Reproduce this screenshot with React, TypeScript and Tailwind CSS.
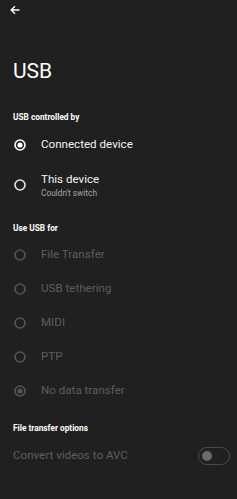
import React from "react";

function Radio({ checked, color }: { checked?: boolean; color: string }) {
  return (
    <svg width="12" height="12" viewBox="0 0 12 12" className="shrink-0">
      <circle cx="6" cy="6" r="5" fill="none" stroke={color} strokeWidth="1.6" />
      {checked && <circle cx="6" cy="6" r="2.6" fill={color} />}
    </svg>
  );
}

function Header({ children }: { children: React.ReactNode }) {
  return (
    <div className="px-[13px] h-[12px] leading-[12px] text-[8.3px] font-bold text-white">
      {children}
    </div>
  );
}

function DisabledRow({ label, checked }: { label: string; checked?: boolean }) {
  return (
    <div className="flex items-center h-[34px] pl-[14px]">
      <Radio checked={checked} color="#555555" />
      <span className="ml-[15px] text-[11.6px] text-[#5e5e5e]">{label}</span>
    </div>
  );
}

export default function App() {
  return (
    <div
      className="w-[237px] h-[499px] bg-[#202020] overflow-hidden"
      style={{ fontFamily: "Roboto, 'Noto Sans', sans-serif" }}
    >
      <div className="h-[20px] flex items-center pl-[10px]">
        <svg width="10" height="10" viewBox="0 0 10 10">
          <path d="M9.5 5H1.2M5 1.2L1.2 5L5 8.8" fill="none" stroke="#ffffff" strokeWidth="1.4" />
        </svg>
      </div>
      <div className="mt-[37px] px-[13px] h-[28px] leading-[28px] text-[21px] text-white">USB</div>
      <div className="mt-[26px]">
        <Header>USB controlled by</Header>
      </div>
      <div className="flex items-center h-[34px] mt-[5px] pl-[14px]">
        <Radio checked color="#ffffff" />
        <span className="ml-[15px] text-[11.6px] text-[#f2f2f2]">Connected device</span>
      </div>
      <div className="flex items-center h-[46px] pl-[14px]">
        <Radio color="#e6e6e6" />
        <div className="ml-[15px] flex flex-col">
          <span className="text-[11.6px] leading-[16px] text-[#f2f2f2]">This device</span>
          <span className="text-[8.3px] leading-[12px] text-[#a6a6a6]">Couldn't switch</span>
        </div>
      </div>
      <div className="mt-[14px]">
        <Header>Use USB for</Header>
      </div>
      <div className="mt-[4px]">
        <DisabledRow label="File Transfer" />
        <DisabledRow label="USB tethering" />
        <DisabledRow label="MIDI" />
        <DisabledRow label="PTP" />
        <DisabledRow label="No data transfer" checked />
      </div>
      <div className="mt-[14px]">
        <Header>File transfer options</Header>
      </div>
      <div className="flex items-center justify-between h-[34px] mt-[5px] pl-[13px] pr-[7px]">
        <span className="text-[11.6px] text-[#5e5e5e]">Convert videos to AVC</span>
        <div className="w-[32px] h-[18px] rounded-full border border-[#4a4a4a] flex items-center pl-[3px]">
          <div className="w-[10px] h-[10px] rounded-full bg-[#6a6a6a]" />
        </div>
      </div>
    </div>
  );
}
